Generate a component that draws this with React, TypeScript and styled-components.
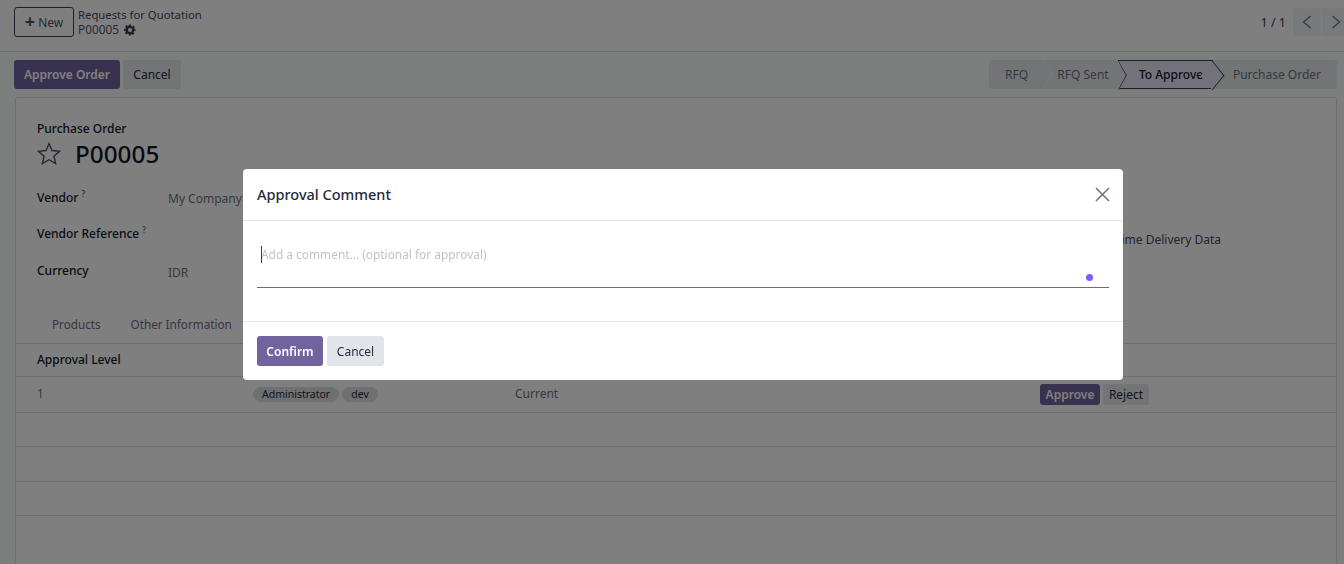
import React from 'react'
import styled, { createGlobalStyle } from 'styled-components'

const GlobalStyle = createGlobalStyle`
  html, body {
    margin: 0;
    padding: 0;
    height: 100%;
    overflow: hidden;
    background: #fff;
    font-family: "Noto Sans", "Open Sans", sans-serif;
    font-size: 12px;
    color: #374151;
  }
`

const stages = [
  { label: 'RFQ', width: 55, kind: 'divided' },
  { label: 'RFQ Sent', width: 74, kind: 'plain', pad: 4 },
  { label: 'To Approve', width: 95, kind: 'current', pad: 11 },
  { label: 'Purchase Order', width: 124, kind: 'plain', pad: 4 },
]

const emptyRows = [34, 35, 34]

const ChevronLeft = () => (
  <svg width="10" height="14" viewBox="0 0 10 14" fill="none" stroke="#6b7280" strokeWidth="1.3">
    <path d="M8.5 1 L1.5 7 L8.5 13" />
  </svg>
)

const ChevronRight = () => (
  <svg width="10" height="14" viewBox="0 0 10 14" fill="none" stroke="#6b7280" strokeWidth="1.3">
    <path d="M1.5 1 L8.5 7 L1.5 13" />
  </svg>
)

const Gear = () => (
  <svg width="12" height="12" viewBox="0 0 24 24" fill="#374151">
    <path
      fillRule="evenodd"
      d="M10 1h4l.6 3.2 1.9.8 2.7-1.8 2.8 2.8-1.8 2.7.8 1.9L23 10v4l-3.2.6-.8 1.9 1.8 2.7-2.8 2.8-2.7-1.8-1.9.8L13.9 23h-4l-.6-3.2-1.9-.8-2.7 1.8-2.8-2.8 1.8-2.7-.8-1.9L0 14v-4l3.2-.6.8-1.9-1.8-2.7 2.8-2.8 2.7 1.8 1.9-.8zM12 8a4 4 0 1 0 0 8 4 4 0 0 0 0-8z"
    />
  </svg>
)

const Star = () => (
  <svg width="24" height="23" viewBox="0 0 24 23" fill="none" stroke="#4b5563" strokeWidth="1.4">
    <path d="M12 1.6 L15 8.5 L22.6 9.2 L16.9 14.2 L18.6 21.6 L12 17.7 L5.4 21.6 L7.1 14.2 L1.4 9.2 L9 8.5 Z" />
  </svg>
)

const Close = () => (
  <svg width="15" height="15" viewBox="0 0 15 15" fill="none" stroke="#6b7280" strokeWidth="1.5">
    <path d="M1 1 L14 14 M14 1 L1 14" />
  </svg>
)

const App = () => (
  <>
    <GlobalStyle />
    <Page>
      <ControlPanel>
        <NewButton>
          <Plus>+</Plus> New
        </NewButton>
        <Breadcrumb>
          <BreadcrumbLink>Requests for Quotation</BreadcrumbLink>
          <BreadcrumbCurrent>
            P00005 <Gear />
          </BreadcrumbCurrent>
        </Breadcrumb>
        <Pager>
          <PagerText>1 / 1</PagerText>
          <PagerButton>
            <ChevronLeft />
          </PagerButton>
          <PagerButton>
            <ChevronRight />
          </PagerButton>
        </Pager>
      </ControlPanel>

      <ActionBar>
        <PrimaryButton>Approve Order</PrimaryButton>
        <SecondaryButton>Cancel</SecondaryButton>
        <StatusBar>
          {stages.map(stage => (
            <Stage
              key={stage.label}
              $kind={stage.kind}
              style={{ width: stage.width, paddingLeft: stage.pad ?? 0 }}
            >
              {stage.label}
            </Stage>
          ))}
        </StatusBar>
      </ActionBar>

      <Sheet>
        <Heading>
          <HeadingLabel>Purchase Order</HeadingLabel>
          <TitleRow>
            <Star />
            <Title>P00005</Title>
          </TitleRow>
        </Heading>

        <Fields>
          <FieldColumn>
            <Field $height={36}>
              <FieldLabel>
                Vendor<Help>?</Help>
              </FieldLabel>
              <FieldValue $top={1}>My Company</FieldValue>
            </Field>
            <Field $height={37}>
              <FieldLabel>
                Vendor Reference<Help>?</Help>
              </FieldLabel>
            </Field>
            <Field $height={36}>
              <FieldLabel>Currency</FieldLabel>
              <FieldValue $top={2}>IDR</FieldValue>
            </Field>
          </FieldColumn>
          <SideLink>On-Time Delivery Data</SideLink>
        </Fields>

        <Tabs>
          <Tab>Products</Tab>
          <Tab>Other Information</Tab>
        </Tabs>

        <TableHead>
          <HeadCell>Approval Level</HeadCell>
        </TableHead>
        <TableRow $height={36}>
          <LevelCell>1</LevelCell>
          <TagCell>
            <Tag>Administrator</Tag>
            <Tag>dev</Tag>
          </TagCell>
          <StatusCell>Current</StatusCell>
          <ActionCell>
            <ApproveButton>Approve</ApproveButton>
            <RejectButton>Reject</RejectButton>
          </ActionCell>
        </TableRow>
        {emptyRows.map((height, i) => (
          <TableRow key={i} $height={height} />
        ))}
      </Sheet>

      <Backdrop>
        <Dialog>
          <DialogHeader>
            <DialogTitle>Approval Comment</DialogTitle>
            <CloseButton>
              <Close />
            </CloseButton>
          </DialogHeader>
          <DialogBody>
            <CommentBox>
              <Caret />
              <Placeholder>Add a comment... (optional for approval)</Placeholder>
              <Dot />
            </CommentBox>
          </DialogBody>
          <DialogFooter>
            <ConfirmButton>Confirm</ConfirmButton>
            <DialogCancel>Cancel</DialogCancel>
          </DialogFooter>
        </Dialog>
      </Backdrop>
    </Page>
  </>
)

const Page = styled.div`
  position: relative;
  height: 564px;
  overflow: hidden;
  background: #f9fafb;
  display: flex;
  flex-direction: column;
`

const ControlPanel = styled.div`
  height: 52px;
  box-sizing: border-box;
  padding: 8px 0 0 14px;
  display: flex;
  align-items: flex-start;
  gap: 4px;
  background: #fff;
  border-bottom: 1px solid #d8dadd;
`

const NewButton = styled.button`
  width: 60px;
  height: 30px;
  margin-top: -1px;
  padding: 0;
  font: 12px "Noto Sans", sans-serif;
  color: #4b5563;
  background: transparent;
  border: 1px solid #374151;
  border-radius: 3px;
`

const Plus = styled.span`
  font-weight: 700;
  font-size: 18px;
  line-height: 12px;
  vertical-align: -1px;
`

const Breadcrumb = styled.div`
  display: flex;
  flex-direction: column;
  line-height: 15px;
  margin-top: -1px;
`

const BreadcrumbLink = styled.span`
  font-size: 11.3px;
  color: #4a4565;
`

const BreadcrumbCurrent = styled.span`
  display: flex;
  align-items: center;
  gap: 5px;
  font-size: 11.8px;
  color: #4b5563;
`

const Pager = styled.div`
  margin-left: auto;
  display: flex;
  align-items: center;
  margin-right: -6px;
`

const PagerText = styled.span`
  font-size: 12.5px;
  margin-right: 6px;
`

const PagerButton = styled.div`
  width: 28px;
  height: 28px;
  margin-left: 1px;
  display: flex;
  align-items: center;
  justify-content: center;
  background: #f1f2f4;
  border-radius: 2px;
`

const ActionBar = styled.div`
  height: 45px;
  box-sizing: border-box;
  padding: 8px 7px 0 14px;
  display: flex;
  align-items: flex-start;
  gap: 3px;
`

const PrimaryButton = styled.button`
  width: 106px;
  height: 29px;
  padding: 0;
  font: 600 12px "Noto Sans", sans-serif;
  color: #fff;
  background: #71639e;
  border: 0;
  border-radius: 3px;
`

const SecondaryButton = styled.button`
  width: 58px;
  height: 29px;
  padding: 0;
  font: 12px "Noto Sans", sans-serif;
  color: #1f2937;
  background: #e7e9ed;
  border: 0;
  border-radius: 3px;
`

const StatusBar = styled.div`
  margin-left: auto;
  display: flex;
  height: 29px;
  background: #e7e9ed;
  border-radius: 3px;
`

const Stage = styled.div<{ $kind: string }>`
  position: relative;
  display: flex;
  align-items: center;
  justify-content: center;
  box-sizing: border-box;
  font-size: 12px;
  color: ${props => (props.$kind === 'current' ? '#111827' : '#6b7280')};
  font-weight: ${props => (props.$kind === 'current' ? 500 : 400)};
  background: ${props => (props.$kind === 'current' ? '#e6e2f2' : 'transparent')};
  border-top: ${props => (props.$kind === 'current' ? '1px solid #374151' : '0')};
  border-bottom: ${props => (props.$kind === 'current' ? '1px solid #374151' : '0')};

  ${props =>
    props.$kind === 'divided' &&
    `
    &::after {
      content: '';
      position: absolute;
      top: 4px;
      right: -10px;
      width: 20px;
      height: 20px;
      transform: scaleX(0.6) rotate(45deg);
      border-top: 1px solid #f3f4f6;
      border-right: 1px solid #f3f4f6;
    }
  `}

  ${props =>
    props.$kind === 'current' &&
    `
    &::before, &::after {
      content: '';
      position: absolute;
      top: 3.5px;
      width: 20px;
      height: 20px;
      border-top: 1px solid #374151;
      border-right: 1px solid #374151;
    }
    &::before {
      left: -10px;
      background: #e7e9ed;
      transform: scaleX(0.55) rotate(45deg);
    }
    &::after {
      right: -10px;
      background: #e6e2f2;
      transform: scaleX(0.8) rotate(45deg);
    }
  `}
`

const Sheet = styled.div`
  flex: 1;
  margin: 0 7px 0 15px;
  background: #fff;
  border: 1px solid #d8dadd;
  border-bottom: 0;
  border-radius: 3px 3px 0 0;
`

const Heading = styled.div`
  padding: 23px 21px 0;
`

const HeadingLabel = styled.div`
  font-size: 12px;
  line-height: 16px;
  font-weight: 500;
  color: #111827;
`

const TitleRow = styled.div`
  display: flex;
  align-items: center;
  gap: 14px;
  height: 33px;
`

const Title = styled.h1`
  margin: 0;
  font-size: 24.3px;
  line-height: 33px;
  font-weight: 500;
  color: #111827;
`

const Fields = styled.div`
  display: flex;
  justify-content: space-between;
  padding: 19px 115px 0 21px;
  height: 141px;
  box-sizing: border-box;
`

const FieldColumn = styled.div`
  display: flex;
  flex-direction: column;
`

const Field = styled.div<{ $height: number }>`
  display: flex;
  height: ${props => props.$height}px;
`

const FieldLabel = styled.div`
  width: 131px;
  font-size: 12px;
  line-height: 18px;
  font-weight: 500;
  color: #111827;
`

const Help = styled.sup`
  margin-left: 3px;
  font-size: 8px;
  line-height: 0;
  color: #0f766e;
`

const FieldValue = styled.div<{ $top: number }>`
  font-size: 12px;
  line-height: 18px;
  margin-top: ${props => props.$top}px;
  color: #6b7280;
`

const SideLink = styled.div`
  margin-top: 42px;
  font-size: 12px;
  line-height: 18px;
  color: #4a4565;
`

const Tabs = styled.div`
  display: flex;
  height: 33px;
  padding-left: 21px;
  box-sizing: border-box;
  border-bottom: 1px solid #d8dadd;
`

const Tab = styled.div`
  padding: 0 15px;
  font-size: 11.7px;
  line-height: 18px;
  margin-top: 4px;
  color: #6f6b85;
`

const TableHead = styled.div`
  display: flex;
  align-items: center;
  height: 33px;
  box-sizing: border-box;
  padding: 0 0 2px 21px;
  border-bottom: 1px solid #d8dadd;
`

const HeadCell = styled.div`
  font-size: 12px;
  font-weight: 500;
  color: #111827;
`

const TableRow = styled.div<{ $height: number }>`
  display: grid;
  grid-template-columns: 237px 262px 525px auto;
  align-items: center;
  height: ${props => props.$height}px;
  box-sizing: border-box;
  border-bottom: 1px solid #d8dadd;
`

// own layer, the thin stem of the digit otherwise picks up a colour fringe
const LevelCell = styled.div`
  padding-left: 21px;
  margin-top: -2px;
  font-size: 12px;
  color: #6b7280;
  will-change: transform;
`

const StatusCell = styled.div`
  margin-top: -2px;
  font-size: 12px;
  color: #6b7280;
`

const TagCell = styled.div`
  display: flex;
  gap: 3px;
`

const Tag = styled.span`
  padding: 0 9px;
  height: 15px;
  font-size: 10.5px;
  line-height: 15px;
  color: #1f2937;
  background: #dfe0e2;
  border-radius: 8px;
`

const ActionCell = styled.div`
  display: flex;
  gap: 3px;
`

const ApproveButton = styled.button`
  width: 60px;
  height: 21px;
  padding: 0;
  font: 600 12px "Noto Sans", sans-serif;
  color: #fff;
  background: #71639e;
  border: 0;
  border-radius: 3px;
`

const RejectButton = styled.button`
  width: 46px;
  height: 21px;
  padding: 0;
  font: 12px "Noto Sans", sans-serif;
  color: #1f2937;
  background: #e7e9ed;
  border: 0;
  border-radius: 3px;
`

const Backdrop = styled.div`
  position: absolute;
  inset: 0;
  background: rgba(0, 0, 0, 0.5);
  padding: 169px 0 0 243px;
`

const Dialog = styled.div`
  width: 880px;
  height: 211px;
  display: flex;
  flex-direction: column;
  background: #fff;
  border-radius: 4px;
`

const DialogHeader = styled.div`
  height: 52px;
  flex: none;
  box-sizing: border-box;
  display: flex;
  align-items: center;
  justify-content: space-between;
  padding: 0 13px 2px 14px;
  border-bottom: 1px solid #e3e5e8;
`

const DialogTitle = styled.div`
  font-size: 14.5px;
  font-weight: 500;
  color: #1f2937;
`

const CloseButton = styled.div`
  display: flex;
  margin-top: 2px;
`

const DialogBody = styled.div`
  flex: 1;
  padding: 14px 14px 0;
`

const CommentBox = styled.div`
  position: relative;
  height: 53px;
  box-sizing: border-box;
  border-bottom: 1px solid #71639e;
  padding: 10px 0 0 4px;
`

const Caret = styled.span`
  position: absolute;
  left: 4px;
  top: 11px;
  width: 1px;
  height: 17px;
  background: #374151;
`

const Placeholder = styled.span`
  font-size: 11.9px;
  line-height: 18px;
  color: #bfc3c9;
`

const Dot = styled.span`
  position: absolute;
  right: 16px;
  top: 39px;
  width: 7px;
  height: 7px;
  border-radius: 50%;
  background: #7c5cfc;
`

const DialogFooter = styled.div`
  height: 59px;
  flex: none;
  box-sizing: border-box;
  padding: 14px 14px 0;
  display: flex;
  align-items: flex-start;
  gap: 4px;
  border-top: 1px solid #e3e5e8;
`

const ConfirmButton = styled.button`
  width: 66px;
  height: 30px;
  padding: 0;
  font: 600 12px "Noto Sans", sans-serif;
  color: #fff;
  background: #71639e;
  border: 0;
  border-radius: 3px;
`

const DialogCancel = styled.button`
  width: 57px;
  height: 30px;
  padding: 0;
  font: 12px "Noto Sans", sans-serif;
  color: #1f2937;
  background: #e1e4e8;
  border: 0;
  border-radius: 3px;
`

export default App
